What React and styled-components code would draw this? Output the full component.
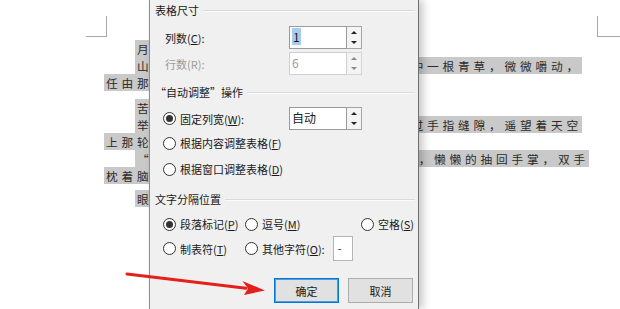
import styled, { createGlobalStyle } from 'styled-components'

const GlobalStyle = createGlobalStyle`
  html, body {
    margin: 0;
    padding: 0;
    background: #fff;
  }
  body {
    width: 620px;
    height: 309px;
    overflow: hidden;
    font-family: 'Noto Sans CJK SC', 'Noto Sans', sans-serif;
  }
`

// only the parts of each line that show beside the dialog are written out
const docLines = [
  { mt: 0, indent: 31, w: 170, left: '月', right: '' },
  { mt: 0, indent: 31, w: 447, left: '山', right: '中一根青草，微微嚼动，' },
  { mt: 0, indent: 0, w: 190, left: '任由那', right: '' },
  { mt: 8, indent: 31, w: 150, left: '苦', right: '' },
  { mt: 0, indent: 31, w: 447, left: '举', right: '过手指缝隙，遥望着天空' },
  { mt: 0, indent: 0, w: 200, left: '上那轮', right: '' },
  { mt: 0, indent: 31, w: 454, left: '“嗖', right: '，懒懒的抽回手掌，双手' },
  { mt: 0, indent: 0, w: 180, left: '枕着脑', right: '' },
  { mt: 6, indent: 31, w: 120, left: '眼', right: '' },
]

const SpinField = ({ value, selected, disabled }) => (
  <Field>
    <ValueBox $disabled={disabled}>
      {selected ? <Selected>{value}</Selected> : value}
    </ValueBox>
    <Spin $disabled={disabled}>
      <SpinHalf>
        <Arrow $up $disabled={disabled} />
      </SpinHalf>
      <SpinHalf>
        <Arrow $disabled={disabled} />
      </SpinHalf>
    </Spin>
  </Field>
)

const Radio = ({ checked, children }) => (
  <RadioItem>
    <Circle $checked={checked} />
    <span>{children}</span>
  </RadioItem>
)

const App = () => {
  return (
    <>
      <GlobalStyle />
      <Page>
        <Corners>
          <Corner $side="left" />
          <Corner $side="right" />
        </Corners>

        <Doc>
          {docLines.map((l, i) => (
            <DocLine key={i} $mt={l.mt} $indent={l.indent}>
              <Mark $w={l.w}>
                <span>{l.left}</span>
                <span>{l.right}</span>
              </Mark>
            </DocLine>
          ))}
        </Doc>

        <Dialog>
          <GroupHeader $mt={0}>
            <span>表格尺寸</span>
            <Rule />
          </GroupHeader>
          <FieldRow $mt={6} $h={23}>
            <Label>
              列数(<u>C</u>):
            </Label>
            <SpinField value="1" selected />
          </FieldRow>
          <FieldRow $mt={3} $h={23}>
            <Label $disabled>行数(R):</Label>
            <SpinField value="6" disabled />
          </FieldRow>

          <GroupHeader $mt={7}>
            <span>“自动调整”操作</span>
            <Rule />
          </GroupHeader>
          <FieldRow $mt={5} $h={23}>
            <Radio checked>
              固定列宽(<u>W</u>):
            </Radio>
            <SpinField value="自动" />
          </FieldRow>
          <FieldRow $mt={3} $h={20}>
            <Radio>
              根据内容调整表格(<u>F</u>)
            </Radio>
          </FieldRow>
          <FieldRow $mt={6} $h={20}>
            <Radio>
              根据窗口调整表格(<u>D</u>)
            </Radio>
          </FieldRow>

          <GroupHeader $mt={10}>
            <span>文字分隔位置</span>
            <Rule />
          </GroupHeader>
          <OptionRow $mt={5} $h={20}>
            <Radio checked>
              段落标记(<u>P</u>)
            </Radio>
            <Radio>
              逗号(<u>M</u>)
            </Radio>
            <Radio>
              空格(<u>S</u>)
            </Radio>
          </OptionRow>
          <OptionRow $mt={2} $h={25}>
            <Radio>
              制表符(<u>T</u>)
            </Radio>
            <Inline>
              <Radio>
                其他字符(<u>O</u>):
              </Radio>
              <CharBox>-</CharBox>
            </Inline>
          </OptionRow>

          <Buttons>
            <Button $primary>确定</Button>
            <Button>取消</Button>
          </Buttons>
        </Dialog>

        <Overlay width="620" height="309" viewBox="0 0 620 309">
          <line x1="127" y1="274" x2="246" y2="288.2" stroke="#e3201b" strokeWidth="3" strokeLinecap="round" />
          <polygon points="265,290.5 242.4,280.9 248.1,288.5 244,294.9" fill="#e3201b" />
        </Overlay>
      </Page>
    </>
  )
}

const Page = styled.div`
  position: relative;
  width: 620px;
  height: 309px;
  overflow: hidden;
  background: #fff;
`
const Corners = styled.div`
  display: flex;
  padding-top: 16px;
`
const Corner = styled.div`
  box-sizing: border-box;
  height: 21px;
  border-bottom: 1px solid #a8a8a8;
  ${(p) =>
    p.$side === 'left'
      ? 'margin-left: 86px; width: 21px; border-right: 1px solid #a8a8a8;'
      : 'margin-left: auto; width: 23px; border-left: 1px solid #a8a8a8;'}
`
const Doc = styled.div`
  padding-left: 104px;
  margin-top: 3px;
`
const DocLine = styled.div`
  display: flex;
  height: 17px;
  margin-top: ${(p) => p.$mt}px;
  padding-left: ${(p) => p.$indent}px;
`
const Mark = styled.div`
  display: flex;
  justify-content: space-between;
  box-sizing: border-box;
  width: ${(p) => p.$w}px;
  padding-left: 2px;
  background: #c9c9c9;
  color: #2b2b2b;
  font-size: 11.7px;
  line-height: 17px;
  letter-spacing: 3.8px;
  white-space: nowrap;
`
const Dialog = styled.div`
  position: absolute;
  left: 149px;
  top: 0;
  width: 270px;
  height: 309px;
  box-sizing: border-box;
  display: flex;
  flex-direction: column;
  background: #f0f0f0;
  border-left: 1px solid #8e8e8e;
  border-right: 1px solid #707070;
  box-shadow: 4px 0 8px rgba(0, 0, 0, 0.22);
  font-size: 11px;
  color: #1a1a1a;
  z-index: 1;
`
const GroupHeader = styled.div`
  display: flex;
  align-items: center;
  height: 20px;
  margin-top: ${(p) => p.$mt}px;
  padding-left: 5px;
  white-space: nowrap;
`
const Rule = styled.div`
  flex: 1;
  height: 0;
  margin: 1px 3px 0 4px;
  border-top: 1px solid #dadada;
  border-bottom: 1px solid #fbfbfb;
`
const FieldRow = styled.div`
  display: grid;
  grid-template-columns: 126px auto;
  align-items: center;
  height: ${(p) => p.$h}px;
  margin-top: ${(p) => p.$mt}px;
  padding-left: 13px;
  white-space: nowrap;
`
const OptionRow = styled.div`
  display: grid;
  grid-template-columns: 82px 116px auto;
  align-items: center;
  height: ${(p) => p.$h}px;
  margin-top: ${(p) => p.$mt}px;
  padding-left: 13px;
  white-space: nowrap;
`
const Label = styled.span`
  padding-left: 2px;
  color: ${(p) => (p.$disabled ? '#9a9a9a' : '#1a1a1a')};
`
const RadioItem = styled.span`
  display: flex;
  align-items: center;
  gap: 4px;
`
const Circle = styled.span`
  position: relative;
  box-sizing: border-box;
  width: 13px;
  height: 13px;
  border-radius: 50%;
  border: 1px solid #333;
  background: #fff;
  flex-shrink: 0;

  &::after {
    content: '';
    display: ${(p) => (p.$checked ? 'block' : 'none')};
    position: absolute;
    left: 2px;
    top: 2px;
    width: 7px;
    height: 7px;
    border-radius: 50%;
    background: #333;
  }
`
const Inline = styled.span`
  display: flex;
  align-items: center;
`
const CharBox = styled.span`
  box-sizing: border-box;
  width: 20px;
  height: 25px;
  margin-left: 8px;
  padding-left: 4px;
  background: #fff;
  border: 1px solid #b5b5b5;
  line-height: 22px;
`
const Field = styled.div`
  display: flex;
  height: 23px;
`
const ValueBox = styled.div`
  box-sizing: border-box;
  width: 58px;
  height: 23px;
  padding-left: 2px;
  background: #fff;
  border: 1px solid ${(p) => (p.$disabled ? '#cfcfcf' : '#9a9a9a')};
  color: ${(p) => (p.$disabled ? '#9a9a9a' : '#1a1a1a')};
  font-size: 12px;
  line-height: 20px;
`
const Selected = styled.span`
  display: inline-block;
  padding: 0 1px;
  background: #a9cbed;
  line-height: 17px;
`
const Spin = styled.div`
  box-sizing: border-box;
  display: flex;
  flex-direction: column;
  width: 15px;
  height: 23px;
  border: 1px solid ${(p) => (p.$disabled ? '#d5d5d5' : '#a5a5a5')};
  border-left: none;
  background: #f4f4f4;
`
const SpinHalf = styled.div`
  flex: 1;
  display: flex;
  align-items: center;
  justify-content: center;
`
const Arrow = styled.span`
  width: 0;
  height: 0;
  border-left: 3px solid transparent;
  border-right: 3px solid transparent;
  ${(p) =>
    p.$up
      ? `border-bottom: 3px solid ${p.$disabled ? '#8a8a8a' : '#222'};`
      : `border-top: 3px solid ${p.$disabled ? '#8a8a8a' : '#222'};`}
`
const Buttons = styled.div`
  display: flex;
  justify-content: flex-end;
  gap: 9px;
  margin-top: 17px;
  padding-right: 5px;
`
const Button = styled.div`
  box-sizing: border-box;
  width: 65px;
  height: 25px;
  display: flex;
  align-items: center;
  justify-content: center;
  background: #e1e1e1;
  border: 1px solid ${(p) => (p.$primary ? '#0078d7' : '#adadad')};
  box-shadow: ${(p) => (p.$primary ? 'inset 0 0 0 1px #4d9de0' : 'none')};
`
const Overlay = styled.svg`
  position: absolute;
  left: 0;
  top: 0;
  pointer-events: none;
  z-index: 2;
`

export default App
